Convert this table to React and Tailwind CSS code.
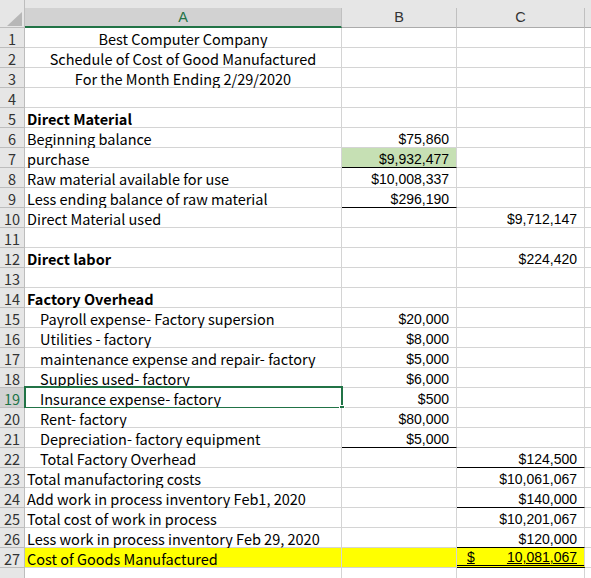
import React from 'react'

const rows = [
  { a: 'Best Computer Company', center: true },
  { a: 'Schedule of Cost of Good Manufactured', center: true },
  { a: 'For the Month Ending 2/29/2020', center: true },
  {},
  { a: 'Direct Material', bold: true },
  { a: 'Beginning balance', b: '$75,860' },
  { a: 'purchase', b: '$9,932,477', bFill: true, bLine: true },
  { a: 'Raw material available for use', b: '$10,008,337' },
  { a: 'Less ending balance of raw material', b: '$296,190', bLine: true },
  { a: 'Direct Material used', c: '$9,712,147' },
  {},
  { a: 'Direct labor', bold: true, c: '$224,420' },
  {},
  { a: 'Factory Overhead', bold: true },
  { a: 'Payroll expense- Factory supersion', indent: true, b: '$20,000' },
  { a: 'Utilities - factory', indent: true, b: '$8,000' },
  { a: 'maintenance expense and repair- factory', indent: true, b: '$5,000' },
  { a: 'Supplies used- factory', indent: true, b: '$6,000' },
  { a: 'Insurance expense- factory', indent: true, b: '$500', selected: true },
  { a: 'Rent- factory', indent: true, b: '$80,000' },
  { a: 'Depreciation- factory equipment', indent: true, b: '$5,000', bLine: true },
  { a: 'Total Factory Overhead', indent: true, c: '$124,500', cLine: true },
  { a: 'Total manufactoring costs', c: '$10,061,067' },
  { a: 'Add work in process inventory Feb1, 2020', c: '$140,000', cLine: true },
  { a: 'Total cost of work in process', c: '$10,201,067' },
  { a: 'Less work in process inventory Feb 29, 2020', c: '$120,000', cLine: true },
  { a: 'Cost of Goods Manufactured', c: '10,081,067', yellow: true, total: true },
  { hideNum: true },
]

const textFont = "font-['Noto_Sans_CJK_SC','Noto_Sans',sans-serif]"
const numFont = "font-['Liberation_Sans',Arial,sans-serif]"

function Row({ r, n }) {
  const fill = r.yellow ? 'bg-[#ffff00]' : 'bg-white'
  return (
    <div className="flex h-5 relative">
      <div
        className={`w-[25px] shrink-0 flex items-end justify-center pb-[1px] border-r border-b border-[#bdbdbd] text-[14.5px] leading-none ${textFont} ${
          r.selected ? 'bg-[#d2d2d2] text-[#217346]' : 'bg-[#e6e6e6] text-[#333]'
        }`}
      >
        {r.hideNum ? '' : n}
      </div>
      <div
        className={`w-[317px] shrink-0 flex items-end pb-[1px] border-r border-b border-[#d4d4d4] text-[14.5px] leading-none text-black whitespace-nowrap ${textFont} ${fill} ${
          r.center ? 'justify-center' : r.indent ? 'pl-[15px]' : 'pl-[2px]'
        } ${r.bold ? 'font-bold' : ''}`}
      >
        {r.a}
      </div>
      <div
        className={`w-[115px] shrink-0 flex items-end justify-end pr-[7px] pb-[1px] border-r text-[14px] leading-none ${numFont} ${
          r.bFill ? 'bg-[#c6e0b4]' : fill
        } ${r.bLine ? 'border-b border-b-black border-r-[#d4d4d4]' : 'border-b border-[#d4d4d4]'}`}
      >
        {r.b}
      </div>
      <div
        className={`w-[128px] shrink-0 flex items-end pb-[1px] border-r border-[#d4d4d4] text-[14px] leading-none ${numFont} ${fill} ${
          r.total ? 'justify-between pl-[10px] pr-[7px] border-b-[3px] border-double border-b-black' : 'justify-end pr-[7px]'
        } ${r.cLine ? 'border-b border-b-black' : r.total ? '' : 'border-b border-b-[#d4d4d4]'}`}
      >
        {r.total ? (
          <>
            <span className="underline">$</span>
            <span className="underline">{r.c}</span>
          </>
        ) : (
          r.c
        )}
      </div>
      <div className="flex-1 bg-white border-b border-[#d4d4d4]" />
      {r.selected && (
        <div className="absolute left-[24px] top-[-2px] w-[319px] h-[23px] border-2 border-[#217346] pointer-events-none">
          <div className="absolute right-[-4px] bottom-[-4px] w-[6px] h-[6px] bg-[#217346] border border-white" />
        </div>
      )}
    </div>
  )
}

function ColHead({ label, width, active }) {
  return (
    <div className={`${width} shrink-0 flex flex-col`}>
      <div
        className={`mt-2 flex-1 border-r border-r-[#c0c0c0] flex items-center justify-center ${
          active ? 'bg-[#d2d2d2] text-[#217346] border-b-2 border-b-[#217346]' : 'text-[#333] border-b border-b-[#ababab]'
        }`}
      >
        {label}
      </div>
    </div>
  )
}

export default function App() {
  return (
    <div className="w-[591px] h-[578px] overflow-hidden bg-white">
      <div className={`flex h-7 bg-[#e6e6e6] text-[14.5px] leading-none ${numFont}`}>
        <div className="w-[25px] shrink-0 relative border-r border-b border-[#bdbdbd]">
          <svg className="absolute left-[7px] top-[12px]" width="15" height="14" viewBox="0 0 15 14">
            <polygon points="15,0 15,14 0,14" fill="#b7b7b7" />
          </svg>
        </div>
        <ColHead label="A" width="w-[317px]" active />
        <ColHead label="B" width="w-[115px]" />
        <ColHead label="C" width="w-[128px]" />
        <div className="flex-1 border-b border-[#ababab]" />
      </div>
      {rows.map((r, i) => (
        <Row key={i} r={r} n={i + 1} />
      ))}
    </div>
  )
}
